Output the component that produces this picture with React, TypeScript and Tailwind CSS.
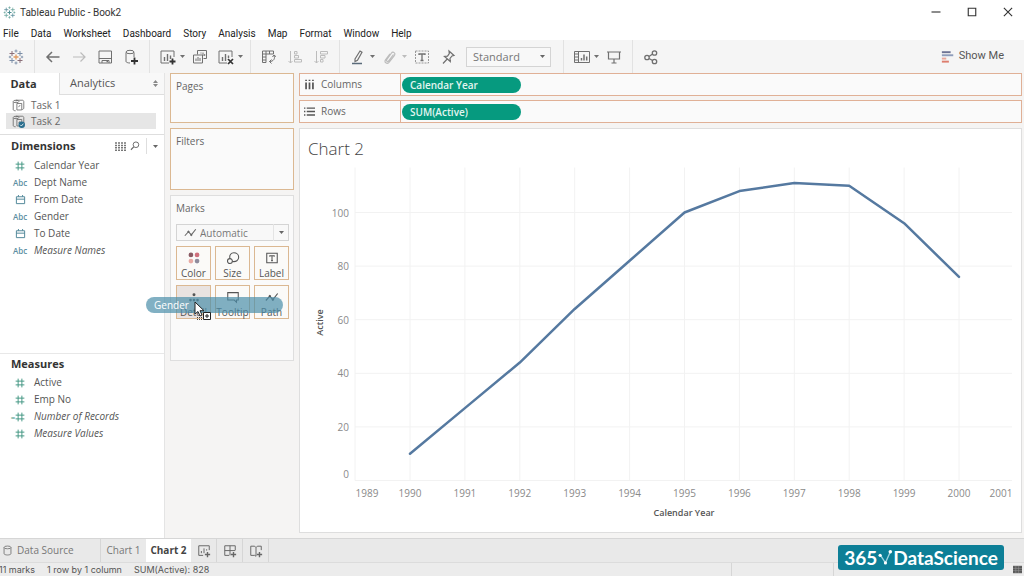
import type { ReactNode } from "react";
import clsx from "clsx";

const MENUS = [
  "File",
  "Data",
  "Worksheet",
  "Dashboard",
  "Story",
  "Analysis",
  "Map",
  "Format",
  "Window",
  "Help",
];

type FieldType = "number" | "text" | "date" | "calc";

const DIMENSIONS: { name: string; type: FieldType; generated?: boolean }[] = [
  { name: "Calendar Year", type: "number" },
  { name: "Dept Name", type: "text" },
  { name: "From Date", type: "date" },
  { name: "Gender", type: "text" },
  { name: "To Date", type: "date" },
  { name: "Measure Names", type: "text", generated: true },
];

const MEASURES: { name: string; type: FieldType; generated?: boolean }[] = [
  { name: "Active", type: "number" },
  { name: "Emp No", type: "number" },
  { name: "Number of Records", type: "calc", generated: true },
  { name: "Measure Values", type: "number", generated: true },
];

const SERIES = [
  { year: 1990, active: 10 },
  { year: 1991, active: 27 },
  { year: 1992, active: 44 },
  { year: 1993, active: 64 },
  { year: 1994, active: 82 },
  { year: 1995, active: 100 },
  { year: 1996, active: 108 },
  { year: 1997, active: 111 },
  { year: 1998, active: 110 },
  { year: 1999, active: 96 },
  { year: 2000, active: 76 },
];

/* ── Icons ──────────────────────────────────────────── */

function Icon({
  children,
  size = 16,
  className,
}: {
  children: ReactNode;
  size?: number;
  className?: string;
}) {
  return (
    <svg
      width={size}
      height={size}
      viewBox="0 0 16 16"
      fill="none"
      stroke="currentColor"
      strokeWidth="1"
      className={clsx("shrink-0", className)}
      aria-hidden="true"
    >
      {children}
    </svg>
  );
}

const plus = (x: number, y: number) =>
  `M${x - 2.5} ${y}h5M${x} ${y - 2.5}v5`;

function TableauIcon({ colors, size }: { colors: string[]; size?: number }) {
  const [a, b, c] = colors;
  return (
    <Icon size={size}>
      <path d={plus(8, 8)} stroke={a} strokeWidth="1.3" />
      <path d={`${plus(4, 4.5)}${plus(12, 11.5)}`} stroke={b} />
      <path d={`${plus(12, 4.5)}${plus(4, 11.5)}`} stroke={c} />
      <path
        d="M6.5 2h3M8 .5v3M6.5 14h3M8 12.5v3M.8 8h2.4M2 6.8v2.4M12.8 8h2.4M14 6.8v2.4"
        stroke={c}
        strokeWidth=".9"
      />
    </Icon>
  );
}

function Caret({ className }: { className?: string }) {
  return (
    <svg
      width="5"
      height="3"
      viewBox="0 0 5 3"
      className={clsx("shrink-0", className)}
      aria-hidden="true"
    >
      <path d="M0 0h5L2.5 3z" fill="currentColor" />
    </svg>
  );
}

const BackIcon = () => (
  <Icon>
    <path d="M14.5 8H2M7 3L2 8l5 5" strokeWidth="1.5" />
  </Icon>
);

const ForwardIcon = () => (
  <Icon>
    <path d="M2 8h12M9.5 3.5L14 8l-4.5 4.5" strokeWidth="1.2" />
  </Icon>
);

const SaveIcon = () => (
  <Icon>
    <path d="M2 2h12.5v12H2zM2 9.5h12.5M5 14v-2.5h7V14" />
    <path d="M9.5 12.5h1.5" strokeWidth="1.5" />
  </Icon>
);

const AddDataIcon = () => (
  <Icon>
    <path d="M3 3.500v9c0 .8 2 1.500 4 1.500M11 3.500v4.500" />
    <ellipse cx="7" cy="3" rx="4" ry="1.7" />
    <path d="M11.5 8.500v7M8 12h7" strokeWidth="1.8" stroke="#333" />
  </Icon>
);

const NewSheetIcon = () => (
  <Icon>
    <path d="M14 8V2H1v12h8" />
    <path d="M4.5 12V8M7.5 12V5M10.5 10V6.5" strokeWidth="1.4" />
    <path d="M12.5 9.500v6M9.5 12.500h6" strokeWidth="1.8" stroke="#333" />
  </Icon>
);

const DuplicateIcon = () => (
  <Icon>
    <path d="M5.5 5.500v-4h9v8h-3M1.5 6h9v8h-9z" />
    <path d="M4 12V9.500M6 12V8M8 12v-3M9 4.500V3.500M11 7V3.500M12.7 7V5" />
  </Icon>
);

const ClearIcon = () => (
  <Icon>
    <path d="M14 8V2H1v12h8" />
    <path d="M4.5 12V8M7.5 12V5M10.5 9V6.5" strokeWidth="1.4" />
    <path d="M10 10l5 5M15 10l-5 5" strokeWidth="1.7" stroke="#333" />
  </Icon>
);

const SwapIcon = () => (
  <Icon>
    <path d="M1.5 2h11v3h-11zM1.5 5v8.500H5V2M1.5 8H5M1.5 11H5M8.5 2v3" />
    <path d="M13 6.500c1.500 3-.5 6-4.500 6M10.5 10.500l-2 2 2 2M11.5 8l1.500-2 2 1.700" />
  </Icon>
);

const SortAscIcon = () => (
  <Icon>
    <path d="M3.5 2v12M1.5 12l2 2 2-2M7.5 2.500h2.500v2.500H7.500zM7.5 6.500h4V9h-4zM7.5 10.500h7V13h-7z" />
  </Icon>
);

const SortDescIcon = () => (
  <Icon>
    <path d="M3.5 2v12M1.5 12l2 2 2-2M7.5 2.500h7V5h-7zM7.5 6.500h4.500V9H7.500zM7.5 10.500h2.500V13H7.500z" />
  </Icon>
);

const HighlightIcon = () => (
  <Icon>
    <path d="M5 10l5-8 2 1.300-4.500 8L5 12.500z" strokeWidth="1.2" />
    <path d="M2 14.500h10" strokeWidth="1.5" stroke="#5a6b7a" />
  </Icon>
);

const ClipIcon = () => (
  <Icon>
    <path
      d="M11.5 5.500l-5 6.500c-1 1.200-2.700 0-1.800-1.300L9.500 4c1.500-2 4.500.2 3 2.300l-5.500 7c-2 2.300-5.300 0-3.500-2.500l4.500-6"
      strokeWidth="1.2"
    />
  </Icon>
);

const TextIcon = () => (
  <Icon>
    <path d="M1.5 2h13v12h-13z" stroke="#999" strokeDasharray="2 1" />
    <path d="M5 6V5h6v1M8 5v6.500M6.5 11.500h3" strokeWidth="1.3" />
  </Icon>
);

const PinIcon = () => (
  <Icon>
    <path
      d="M9 2l5 4.500-2 .5-2 2.500.3 3L4.500 7.500l3-.3L9.300 4.500zM7.2 10L3 14.500"
      strokeWidth="1.2"
    />
  </Icon>
);

const CardsIcon = () => (
  <Icon>
    <path d="M.5 2.500h15v11H.5zM4.5 2.500v11M.5 5h4M.5 8h4M.5 11h4" />
    <path d="M7.5 11.500V9M10 11.500V5.500M12.7 11.500V7.500" strokeWidth="1.5" />
  </Icon>
);

const PresentIcon = () => (
  <Icon>
    <path d="M1 3h14M2.5 3v7h11V3M8 10v4M5.5 14h5" strokeWidth="1.2" />
  </Icon>
);

const ShareIcon = () => (
  <Icon>
    <g strokeWidth="1.3">
      <circle cx="4" cy="8.5" r="2.2" />
      <circle cx="11.5" cy="4" r="2.2" />
      <circle cx="11.5" cy="12.5" r="2.2" />
      <path d="M6 7.500L9.600 5M6 9.500l3.600 2" />
    </g>
  </Icon>
);

const ShowMeIcon = () => (
  <Icon size={14}>
    <path d="M1 2.500h10" strokeWidth="2.2" stroke="#6d7394" />
    <path d="M1 6h13" strokeWidth="2.2" stroke="#8f9dbb" />
    <path d="M1 9.800h5" strokeWidth="2.2" stroke="#e9a79b" />
    <path d="M1 13.300h8" strokeWidth="2.2" stroke="#dd7d6d" />
  </Icon>
);

const DataSourceIcon = ({ active }: { active?: boolean }) => (
  <Icon size={13}>
    <path d="M5 3V1.500h8c1 0 1.500 1 1.500 2V11c0 1-1 2-2 2M1.5 3.500v9.500c0 1 1.500 1.500 3 1.500" />
    <ellipse cx="5" cy="3" rx="3.5" ry="1.5" />
    <path d="M6 5.500h6v8H6zM8 10l2-2.500" />
    {active && (
      <>
        <circle cx="12" cy="12" r="4" fill="#2b6f8e" stroke="none" />
        <path d="M10 12l1.500 1.500L14 10.700" stroke="#fff" />
      </>
    )}
  </Icon>
);

const TrendIcon = ({ size = 13 }: { size?: number }) => (
  <Icon size={size}>
    <path d="M1 12l4.500-5 3.500 4 5.500-7" strokeWidth="1.3" />
    <circle cx="5.5" cy="7" r=".9" fill="currentColor" />
    <circle cx="9" cy="11" r=".9" fill="currentColor" />
  </Icon>
);

function FieldIcon({ type }: { type: FieldType }) {
  if (type === "text")
    return <span className="text-[8px] font-semibold text-[#5c8fa3]">Abc</span>;
  if (type === "date")
    return (
      <Icon size={11} className="text-[#4f8698]">
        <path d="M2 4h12v10H2zM2 7.500h12M5 1.500V4M11 1.500V4" strokeWidth="1.4" />
      </Icon>
    );
  return (
    <span className="flex items-center text-[#3f9480]">
      {type === "calc" && <span className="-ml-1 text-[8px]">=</span>}
      <Icon size={10}>
        <path d="M5 1v14M11 1v14M1 5h14M1 11h14" strokeWidth="1.5" />
      </Icon>
    </span>
  );
}

/* ── Toolbar ────────────────────────────────────────── */

function Tool({
  label,
  children,
  dim,
  menu,
}: {
  label: string;
  children: ReactNode;
  dim?: boolean;
  menu?: boolean;
}) {
  return (
    <div
      className={clsx(
        "flex items-center",
        dim ? "text-[#bcbcbc]" : "text-[#707070]",
      )}
    >
      <button
        type="button"
        aria-label={label}
        className="flex h-6 w-6 items-center justify-center"
      >
        {children}
      </button>
      {menu && (
        <button
          type="button"
          aria-label={`${label} options`}
          className="flex h-6 w-1.5 items-center"
        >
          <Caret />
        </button>
      )}
    </div>
  );
}

function Divider() {
  return <div className="mx-1.5 h-full w-px shrink-0 bg-[#e2e2e2]" />;
}

function Toolbar() {
  return (
    <div className="flex h-[33px] shrink-0 items-center bg-[#f5f5f5]">
      <button
        type="button"
        aria-label="Start page"
        className="flex h-6 w-7 items-center justify-center pl-1"
      >
        <TableauIcon colors={["#e09a62", "#8a6f78", "#7d8fa8"]} />
      </button>
      <Divider />
      <div className="flex gap-0.5">
        <Tool label="Undo">
          <BackIcon />
        </Tool>
        <Tool label="Redo" dim>
          <ForwardIcon />
        </Tool>
        <Tool label="Save">
          <SaveIcon />
        </Tool>
        <Tool label="New data source">
          <AddDataIcon />
        </Tool>
      </div>
      <Divider />
      <div className="flex gap-0.5">
        <Tool label="New worksheet" menu>
          <NewSheetIcon />
        </Tool>
        <Tool label="Duplicate">
          <DuplicateIcon />
        </Tool>
        <Tool label="Clear sheet" menu>
          <ClearIcon />
        </Tool>
      </div>
      <Divider />
      <div className="flex gap-0.5">
        <Tool label="Swap rows and columns">
          <SwapIcon />
        </Tool>
        <Tool label="Sort ascending" dim>
          <SortAscIcon />
        </Tool>
        <Tool label="Sort descending" dim>
          <SortDescIcon />
        </Tool>
      </div>
      <Divider />
      <div className="flex gap-0.5">
        <Tool label="Highlight" menu>
          <HighlightIcon />
        </Tool>
        <Tool label="Group members" dim menu>
          <ClipIcon />
        </Tool>
        <Tool label="Show mark labels">
          <TextIcon />
        </Tool>
        <Tool label="Fix axes">
          <PinIcon />
        </Tool>
      </div>
      <div className="relative mx-1.5">
        <select
          aria-label="Fit"
          defaultValue="Standard"
          className="block h-5 w-[85px] appearance-none border border-[#d4d4d4] bg-[#f8f8f8] pl-1.5 text-[11px] leading-4 text-[#777]"
        >
          <option>Standard</option>
          <option>Fit Width</option>
          <option>Entire View</option>
        </select>
        <Caret className="pointer-events-none absolute top-2 right-1.5 text-[#666]" />
      </div>
      <Divider />
      <div className="flex gap-0.5">
        <Tool label="Show cards" menu>
          <CardsIcon />
        </Tool>
        <Tool label="Presentation mode">
          <PresentIcon />
        </Tool>
      </div>
      <Divider />
      <Tool label="Share">
        <ShareIcon />
      </Tool>
      <button
        type="button"
        className="mr-5 ml-auto flex items-center gap-1 font-['Roboto'] text-[11px] text-[#555]"
      >
        <ShowMeIcon />
        Show Me
      </button>
    </div>
  );
}

/* ── Data pane ──────────────────────────────────────── */

function FieldList({ fields }: { fields: typeof DIMENSIONS }) {
  return (
    <ul>
      {fields.map((f) => (
        <li key={f.name} className="flex h-[17px] items-center pl-2">
          <span className="flex w-6 shrink-0 items-center justify-center">
            <FieldIcon type={f.type} />
          </span>
          <span
            className={clsx(
              "pl-0.5 whitespace-nowrap text-[#555]",
              f.generated && "italic",
            )}
          >
            {f.name}
          </span>
        </li>
      ))}
    </ul>
  );
}

function DataPane() {
  return (
    <aside className="flex w-[165px] shrink-0 flex-col border-r border-[#e4e4e4] bg-white text-[10px]">
      <div className="flex h-[22px] shrink-0 text-[11px]">
        <button
          type="button"
          className="w-[59px] pr-3 text-center font-bold text-[#333]"
        >
          Data
        </button>
        <button
          type="button"
          className="flex flex-1 items-center justify-between border-b border-l border-[#dedede] bg-[#f8f8f8] pr-1.5 pl-2.5 text-[#555]"
        >
          Analytics
          <svg width="5" height="7" viewBox="0 0 5 7" aria-hidden="true">
            <path d="M0 3L2.500 0 5 3zM0 4l2.500 3L5 4z" fill="#888" />
          </svg>
        </button>
      </div>

      <ul className="border-b border-[#dedede] pt-0.5 pb-[5px] text-[#666]">
        <li className="mr-2 ml-1.5 flex h-4 items-center gap-1.5 pl-1.5">
          <DataSourceIcon />
          Task 1
        </li>
        <li className="mr-2 ml-1.5 flex h-4 items-center gap-1.5 bg-[#e6e6e6] pl-1.5">
          <DataSourceIcon active />
          Task 2
        </li>
      </ul>

      <section className="h-[219px] shrink-0 border-b border-[#e8e8e8]">
        <div className="flex h-[22px] items-center pr-1 pl-[11px]">
          <h2 className="flex-1 text-[11px] font-bold text-[#333]">
            Dimensions
          </h2>
          <button type="button" aria-label="View data" className="px-0.5">
            <svg
              width="11"
              height="9"
              viewBox="0 0 11 9"
              stroke="#777"
              strokeWidth="1.5"
              aria-hidden="true"
            >
              <path
                d="M0 1h11M0 3.400h11M0 5.800h11M0 8.200h11"
                strokeDasharray="2 1"
              />
            </svg>
          </button>
          <button type="button" aria-label="Find field" className="px-0.5">
            <Icon size={10} className="text-[#666]">
              <circle cx="9.5" cy="6" r="4.5" strokeWidth="1.5" />
              <path d="M6 9.500L1.500 14" strokeWidth="1.8" />
            </Icon>
          </button>
          <span className="mx-1 h-4 w-px bg-[#dedede]" />
          <button
            type="button"
            aria-label="Dimensions menu"
            className="px-0.5 text-[#666]"
          >
            <Caret />
          </button>
        </div>
        <FieldList fields={DIMENSIONS} />
      </section>

      <section className="min-h-0 flex-1">
        <h2 className="h-5 pl-[11px] text-[11px] leading-5 font-bold text-[#333]">
          Measures
        </h2>
        <FieldList fields={MEASURES} />
      </section>
    </aside>
  );
}

/* ── Cards ──────────────────────────────────────────── */

function MarkButton({
  label,
  children,
  active,
}: {
  label: string;
  children: ReactNode;
  active?: boolean;
}) {
  return (
    <button
      type="button"
      className={clsx(
        "flex h-[34px] flex-col items-center justify-between border border-[#dbb892] pt-1 text-[#555]",
        active ? "bg-[#e9e3e1]" : "bg-[#fbfaf8]",
      )}
    >
      {children}
      <span className="leading-3">{label}</span>
    </button>
  );
}

function DragPill() {
  return (
    <div className="absolute top-[101px] -left-[25px] flex h-4 w-[137px] items-center rounded-full bg-[#4b8fa9]/70 pl-2 text-[10px] text-white">
      Gender
      <svg
        width="18"
        height="20"
        viewBox="0 0 18 20"
        className="absolute top-1 left-12"
        aria-hidden="true"
      >
        <path
          d="M1 1v12l3-2.500 2 4.500 2-1-2-4.300h4z"
          fill="#fff"
          stroke="#222"
        />
        <path d="M3 16.500h6M3 18.500h6" stroke="#444" strokeDasharray="1 1" />
        <path d="M9.5 11.500h7v7h-7z" fill="#fff" stroke="#222" />
        <path d="M13 13v4M11 15h4" stroke="#222" />
      </svg>
    </div>
  );
}

function MarksCard() {
  const dots = ["#8a5a62", "#d0707c", "#e8aaa4", "#8f8b9c"];
  return (
    <section className="relative h-[166px] border border-[#dedede] bg-[#fafafa] pr-1 pl-[5px]">
      <h3 className="pt-1 leading-4 text-[#666]">Marks</h3>
      <div className="relative mt-2 text-[#666]">
        <span className="pointer-events-none absolute top-0.5 left-2">
          <TrendIcon />
        </span>
        <select
          aria-label="Mark type"
          defaultValue="Automatic"
          className="block h-[17px] w-full appearance-none border border-[#d4d4d4] bg-[#f8f8f8] pl-[23px] text-[10px] leading-3 text-[#777]"
        >
          <option>Automatic</option>
          <option>Bar</option>
          <option>Line</option>
        </select>
        <span className="pointer-events-none absolute inset-y-0 right-0 flex w-4 items-center justify-center border-l border-[#e4e4e4]">
          <Caret />
        </span>
      </div>
      <div className="mt-[5px] grid grid-cols-3 gap-x-1 gap-y-[5px]">
        <MarkButton label="Color">
          <Icon size={14}>
            <g stroke="none">
              <circle cx="4.5" cy="4.5" r="2.7" fill={dots[0]} />
              <circle cx="11.5" cy="4.5" r="2.7" fill={dots[1]} />
              <circle cx="4.5" cy="11.5" r="2.7" fill={dots[2]} />
              <circle cx="11.5" cy="11.5" r="2.7" fill={dots[3]} />
            </g>
          </Icon>
        </MarkButton>
        <MarkButton label="Size">
          <Icon size={14}>
            <circle cx="4.5" cy="11.5" r="2.8" strokeWidth="1.2" />
            <path
              d="M4.5 8.500C3.500 4.500 6 2 9 2c3.200 0 5.500 2.300 5.500 5.200 0 3.300-3 5.600-7.200 4.800"
              strokeWidth="1.2"
            />
          </Icon>
        </MarkButton>
        <MarkButton label="Label">
          <Icon size={14}>
            <path d="M2 2.500h12v11H2z" strokeWidth="1.2" />
            <path d="M5.5 6.500V5.500h5v1M8 5.500v5.500M7 11h2" strokeWidth="1.2" />
          </Icon>
        </MarkButton>
        <MarkButton label="Detail" active>
          <Icon size={14}>
            <g stroke="none" fill="#555">
              <circle cx="8" cy="5.5" r="1.7" />
              <circle cx="4" cy="11.5" r="1.5" />
              <circle cx="8" cy="11.5" r="1.5" />
              <circle cx="12" cy="11.5" r="1.5" />
            </g>
          </Icon>
        </MarkButton>
        <MarkButton label="Tooltip">
          <Icon size={14}>
            <path d="M2 3h12v8.500h-2V14l-2.500-2.500H2z" strokeWidth="1.2" />
          </Icon>
        </MarkButton>
        <MarkButton label="Path">
          <TrendIcon size={14} />
        </MarkButton>
      </div>
      <DragPill />
    </section>
  );
}

function Cards() {
  return (
    <div className="flex w-[124px] shrink-0 flex-col gap-[5px] text-[10px]">
      <section className="h-[50px] border border-[#dbb892] bg-[#fafafa] px-[5px] pt-1">
        <h3 className="leading-4 text-[#666]">Pages</h3>
      </section>
      <section className="h-[62px] border border-[#dbb892] bg-[#fafafa] px-[5px] pt-1">
        <h3 className="leading-4 text-[#666]">Filters</h3>
      </section>
      <MarksCard />
    </div>
  );
}

/* ── Shelves and view ───────────────────────────────── */

function Shelf({
  label,
  field,
  icon,
}: {
  label: string;
  field: string;
  icon: ReactNode;
}) {
  return (
    <div className="flex h-[23px] border border-[#e0b096] bg-[#fafafa] text-[10px]">
      <div className="flex w-[101px] shrink-0 items-center gap-1.5 border-r border-[#e0b096] pl-1 text-[#666]">
        {icon}
        {label}
      </div>
      <div className="flex items-center pl-px">
        <button
          type="button"
          className="h-4 w-[119px] rounded-full bg-[#069a7f] pl-2 text-left leading-4 font-semibold text-[#e2f5f0]"
        >
          {field}
        </button>
      </div>
    </div>
  );
}

const xOf = (year: number) => 110 + (year - 1990) * 54.9;
const yOf = (value: number) => 319 - value * 2.68;

function LineChart() {
  const years = SERIES.map((d) => d.year);
  const line = SERIES.map((d) => `${xOf(d.year)},${yOf(d.active)}`).join(" ");
  return (
    <svg
      viewBox="0 0 721 370"
      className="min-h-0 w-full flex-1"
      role="img"
      aria-label="Active by Calendar Year"
    >
      <g stroke="#f2f2f2">
        {[20, 40, 60, 80, 100].map((v) => (
          <line key={v} x1="55" x2="712" y1={yOf(v)} y2={yOf(v)} />
        ))}
        {years.map((y) => (
          <line key={y} x1={xOf(y)} x2={xOf(y)} y1="6" y2="319" />
        ))}
        <path d="M55 6v313h657" fill="none" />
      </g>
      <g fill="#8a8a8a" fontSize="10" textAnchor="end">
        <text x="49" y="316">
          0
        </text>
        {[20, 40, 60, 80, 100].map((v) => (
          <text key={v} x="49" y={yOf(v) + 4}>
            {v}
          </text>
        ))}
      </g>
      <g fill="#8a8a8a" fontSize="10" textAnchor="middle">
        <text x="67" y="335">
          1989
        </text>
        {years.map((y) => (
          <text key={y} x={xOf(y)} y="335">
            {y}
          </text>
        ))}
        <text x="701" y="335">
          2001
        </text>
      </g>
      <g fill="#555" fontSize="9" fontWeight="600" textAnchor="middle">
        <text x="384" y="354">
          Calendar Year
        </text>
        <text transform="translate(23 161) rotate(-90)">Active</text>
      </g>
      <polyline
        points={line}
        fill="none"
        stroke="#5579a0"
        strokeWidth="2.5"
        strokeLinejoin="round"
        strokeLinecap="round"
      />
    </svg>
  );
}

function View() {
  return (
    <main className="flex min-w-0 flex-1 flex-col gap-1">
      <Shelf
        label="Columns"
        field="Calendar Year"
        icon={
          <Icon size={11} className="text-[#555]">
            <path
              d="M3 1v2M8 1v2M13 1v2M3 5v10M8 5v10M13 5v10"
              strokeWidth="2.5"
            />
          </Icon>
        }
      />
      <Shelf
        label="Rows"
        field="SUM(Active)"
        icon={
          <Icon size={11} className="text-[#555]">
            <path d="M0 3h2M4 3h12M0 8h2M4 8h12M0 13h2M4 13h12" strokeWidth="2" />
          </Icon>
        }
      />
      <section className="mt-px flex min-h-0 flex-1 flex-col border border-[#dedede] bg-white">
        <h1 className="h-8 shrink-0 pt-2 pl-2 text-[17px] leading-6 font-light text-[#444]">
          Chart 2
        </h1>
        <LineChart />
      </section>
    </main>
  );
}

/* ── Bottom bars ────────────────────────────────────── */

const PLUS_CORNER = "M12 9v6M9 12h6";

function SheetTabs() {
  const newTabs = [
    { label: "New worksheet", d: "M14 7V2H2v11h5M5 10.500V8M8 10.500V5M11 7.500V6" },
    { label: "New dashboard", d: "M14 7V2H2v11h5M8 2v11M2 7.500h12" },
    { label: "New story", d: "M14 7V2.500H9.500L8 4 6.500 2.500H2V13h4.500L8 14M8 4v10" },
  ];
  return (
    <nav className="flex h-6 shrink-0 border-t border-[#d6d6d6] bg-[#e9e9e9] text-[10px] text-[#777]">
      <button
        type="button"
        className="flex w-[101px] items-center gap-1 border-r border-[#d6d6d6] pl-0.5"
      >
        <Icon size={11}>
          <ellipse cx="8" cy="3.5" rx="5" ry="2" strokeWidth="1.3" />
          <path d="M3 3.500v9c0 2.700 10 2.700 10 0v-9" strokeWidth="1.3" />
        </Icon>
        Data Source
      </button>
      <button type="button" className="w-[45px]">
        Chart 1
      </button>
      <button type="button" className="w-[45px] bg-white font-bold text-[#444]">
        Chart 2
      </button>
      {newTabs.map((t) => (
        <button
          key={t.label}
          type="button"
          aria-label={t.label}
          className="flex w-[26px] items-center justify-center border-r border-[#d6d6d6] text-[#666]"
        >
          <Icon size={14}>
            <path d={t.d} strokeWidth="1.1" />
            <path d={PLUS_CORNER} strokeWidth="1.6" />
          </Icon>
        </button>
      ))}
    </nav>
  );
}

function StatusBar() {
  return (
    <footer className="flex h-3.5 shrink-0 items-center justify-between border-t border-[#dcdcdc] bg-[#ececec] text-[9px] leading-3 text-[#555]">
      <div className="-ml-px flex gap-3 font-['Inter']">
        <span>11 marks</span>
        <span>1 row by 1 column</span>
        <span>SUM(Active): 828</span>
      </div>
      <div className="flex h-full items-center">
        <span className="h-full w-[102px] border-l border-[#d6d6d6]" />
        <span className="h-full w-[180px] border-l border-[#d6d6d6]" />
        <Icon size={9} className="mr-0.5 text-[#555]">
          <path d="M0 2h16v12H0z" fill="currentColor" />
          <path d="M0 6h16M0 10h16M5 2v12M10 2v12" stroke="#999" />
        </Icon>
      </div>
    </footer>
  );
}

function Brand() {
  return (
    <div className="absolute right-5 bottom-1.5 flex h-[25px] w-[166px] items-center justify-center rounded-[3px] bg-[#0d7f97] font-['Lato'] text-[19px] leading-6 font-bold text-white">
      365
      <svg width="16" height="20" viewBox="0 0 18 20" aria-hidden="true">
        <path
          d="M4 7l5.500 8.500L15 3"
          fill="none"
          stroke="#9fd3de"
          strokeWidth="1.5"
        />
        <circle cx="3.5" cy="7" r="1.8" fill="#fff" />
        <circle cx="9.5" cy="15.5" r="1.8" fill="#fff" />
        <circle cx="15" cy="3" r="2" fill="#fff" />
      </svg>
      DataScience
    </div>
  );
}

export default function App() {
  return (
    <div className="relative flex h-screen flex-col overflow-hidden bg-[#f5f4f3] font-['Open_Sans','Noto_Sans',sans-serif] text-[10px]">
      <header className="flex h-6 shrink-0 items-center bg-white pl-[3px] text-[#333]">
        <TableauIcon colors={["#4f8f94", "#5d8f9c", "#6fa8a0"]} size={13} />
        <span className="flex-1 pl-1 font-['Roboto']">
          Tableau Public - Book2
        </span>
        <div className="flex gap-6 pr-2.5">
          <button type="button" aria-label="Minimize">
            <Icon size={12}>
              <path d="M2 8h12" strokeWidth="1.5" />
            </Icon>
          </button>
          <button type="button" aria-label="Maximize">
            <Icon size={12}>
              <path d="M3 3h10v10H3z" strokeWidth="1.5" />
            </Icon>
          </button>
          <button type="button" aria-label="Close">
            <Icon size={12}>
              <path
                d="M2.5 2.500l11 11M13.5 2.500l-11 11"
                strokeWidth="1.5"
              />
            </Icon>
          </button>
        </div>
      </header>
      <nav className="flex h-4 shrink-0 items-center gap-3 bg-white pt-0.5 pl-[3px] font-['Roboto'] text-[#222]">
        {MENUS.map((m) => (
          <button key={m} type="button">
            {m}
          </button>
        ))}
      </nav>
      <Toolbar />

      <div className="flex min-h-0 flex-1">
        <DataPane />
        <div className="flex min-w-0 flex-1 gap-[5px] pr-0.5 pb-[5px] pl-[5px]">
          <Cards />
          <View />
        </div>
      </div>

      <SheetTabs />
      <StatusBar />
      <Brand />
    </div>
  );
}
